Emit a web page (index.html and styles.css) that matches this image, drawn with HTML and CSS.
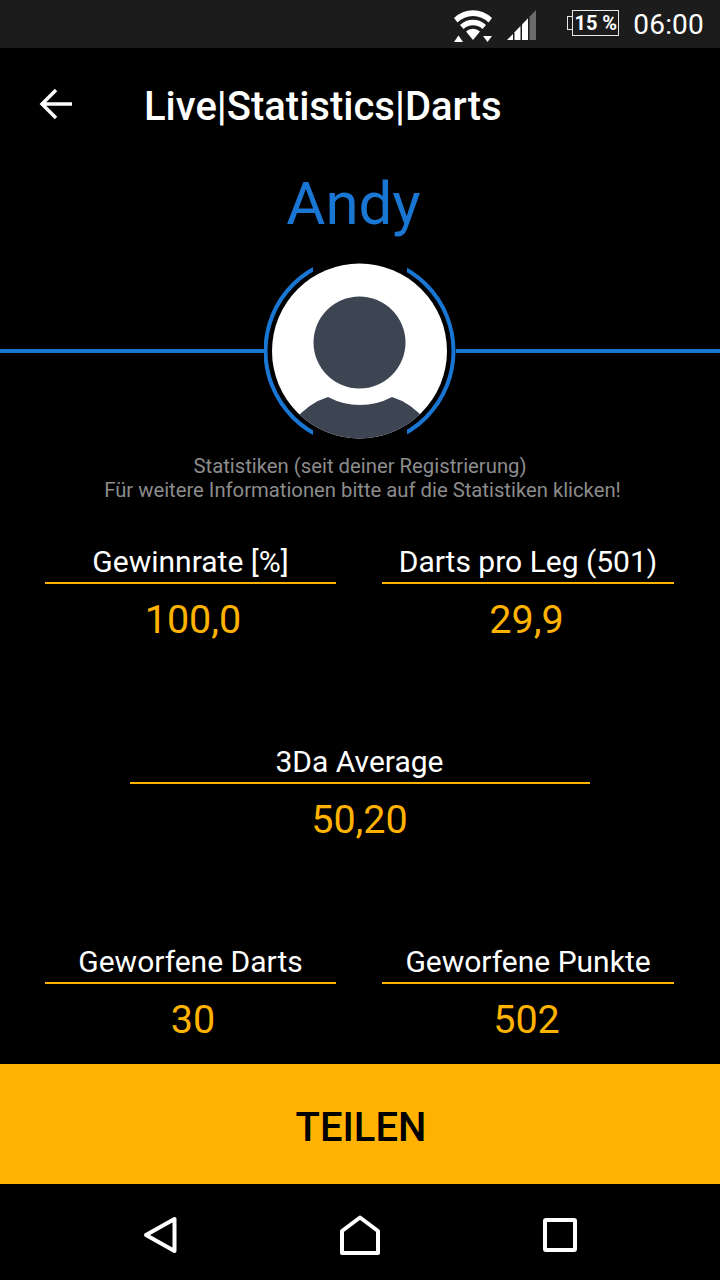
FILE: index.html
```html
<!DOCTYPE html>
<html lang="de">
    <head>
        <meta charset="UTF-8" />
        <meta name="viewport" content="width=device-width, initial-scale=1.0" />
        <link rel="stylesheet" href="styles.css">
        <title>Live|Statistics|Darts</title>
    </head>
    <body>
        <div class="status-bar">
            <svg class="wifi" width="40" height="32" viewBox="0 0 40 32">
                <path d="M1 8 A27 27 0 0 1 39 8 L35.500 12.500 A22 22 0 0 0 4.500 12.500 Z" fill="#fff" />
                <path d="M7 15 A19 19 0 0 1 33 15 L29.500 19 A14 14 0 0 0 10.500 19 Z" fill="#fff" />
                <path d="M13 21.500 A10 10 0 0 1 27 21.500 L20 30 Z" fill="#fff" />
                <path d="M1 32 L5.500 25.500 L10 32 Z" fill="#fff" />
                <path d="M30 26 L39 26 L34.500 32 Z" fill="#fff" />
            </svg>
            <svg class="signal" width="30" height="30" viewBox="0 0 30 30">
                <path d="M0 30 L6 24 L6 30 Z" fill="#fff" />
                <path d="M7.500 30 L7.500 22.300 L13.500 16 L13.500 30 Z" fill="#fff" />
                <path d="M15 30 L15 14.500 L21 8.300 L21 30 Z" fill="#fff" />
                <path d="M22.500 30 L22.500 6.800 L29 0 L29 30 Z" fill="#6b6b6b" />
            </svg>
            <div class="battery">
                <span class="battery-cap"></span>
                <span class="battery-text">15 %</span>
            </div>
            <span class="clock">06:00</span>
        </div>

        <div class="toolbar">
            <svg class="back" width="34" height="32" viewBox="0 0 34 32">
                <path d="M33 16 L3 16 M17 2 L3 16 L17 30" fill="none" stroke="#fff" stroke-width="3.500" />
            </svg>
            <h1 class="title">Live|Statistics|Darts</h1>
        </div>

        <div class="player-name">Andy</div>

        <div class="avatar-row">
            <div class="avatar-line"></div>
            <svg class="avatar" width="192" height="194" viewBox="1 0 192 194">
                <defs>
                    <clipPath id="ring-clip">
                        <rect x="0" y="0" width="50" height="194" />
                        <rect x="144" y="0" width="50" height="194" />
                    </clipPath>
                    <clipPath id="face-clip">
                        <circle cx="96.500" cy="97" r="87.500" />
                    </clipPath>
                </defs>
                <circle cx="96.500" cy="97" r="94" fill="none" stroke="#1976d2" stroke-width="4" clip-path="url(#ring-clip)" />
                <circle cx="96.500" cy="97" r="87.500" fill="#fff" />
                <circle cx="96.500" cy="88.500" r="46" fill="#3d4552" />
                <path d="M30 194 L30 168 Q45 149 65 143 A68 68 0 0 0 129 143 Q149 149 164 168 L164 194 Z" fill="#3d4552" clip-path="url(#face-clip)" />
            </svg>
            <div class="avatar-line"></div>
        </div>

        <p class="hint">
            <span class="hint-line">Statistiken (seit deiner Registrierung)</span>
            <span class="hint-line hint-line-long">Für weitere Informationen bitte auf die Statistiken klicken!</span>
        </p>

        <div class="stats">
            <div class="stat-row">
                <div class="stat stat-left">
                    <div class="stat-label">Gewinnrate [%]</div>
                    <div class="stat-value">100,0</div>
                </div>
                <div class="stat stat-right">
                    <div class="stat-label">Darts pro Leg (501)</div>
                    <div class="stat-value">29,9</div>
                </div>
            </div>
            <div class="stat-row">
                <div class="stat stat-wide">
                    <div class="stat-label">3Da Average</div>
                    <div class="stat-value">50,20</div>
                </div>
            </div>
            <div class="stat-row">
                <div class="stat stat-left">
                    <div class="stat-label">Geworfene Darts</div>
                    <div class="stat-value">30</div>
                </div>
                <div class="stat stat-right">
                    <div class="stat-label">Geworfene Punkte</div>
                    <div class="stat-value">502</div>
                </div>
            </div>
        </div>

        <button class="share" type="button">TEILEN</button>

        <div class="nav-bar">
            <svg width="34" height="38" viewBox="0 0 34 38">
                <path d="M31.500 3 L31.500 35 L3 19 Z" fill="none" stroke="#fff" stroke-width="4" stroke-linejoin="round" />
            </svg>
            <svg width="40" height="40" viewBox="0 0 40 40">
                <path d="M2 16 L20 2.500 L38 16 L38 38 L2 38 Z" fill="none" stroke="#fff" stroke-width="4" stroke-linejoin="round" />
            </svg>
            <svg width="34" height="34" viewBox="0 0 34 34">
                <rect x="2" y="2" width="30" height="30" rx="1" fill="none" stroke="#fff" stroke-width="4" />
            </svg>
        </div>
    </body>
</html>
```

FILE: styles.css
```css
* {
    margin: 0;
    padding: 0;
    box-sizing: border-box;
    font-family: Roboto, "Noto Sans", sans-serif;
}

body {
    width: 720px;
    height: 1280px;
    background-color: #000;
    color: #fff;
    overflow: hidden;
}

.status-bar {
    display: flex;
    align-items: center;
    height: 48px;
    padding-right: 16px;
    background-color: #1c1c1c;
    justify-content: flex-end;
}

.wifi {
    margin-right: 14px;
    margin-top: 4px;
}

.signal {
    margin-right: 35px;
    margin-top: 2px;
}

.battery {
    display: flex;
    align-items: center;
    justify-content: center;
    position: relative;
    width: 47px;
    height: 26px;
    margin-right: 14px;
    margin-bottom: 3px;
    border: 1px solid #e8e8e8;
}

.battery-cap {
    position: absolute;
    left: -6px;
    top: 5px;
    width: 5px;
    height: 14px;
    border: 1px solid #e8e8e8;
    border-right: none;
}

.battery-text {
    font-size: 20px;
    font-weight: 700;
    line-height: 24px;
    white-space: nowrap;
}

.clock {
    font-size: 28px;
    letter-spacing: 0.2px;
    line-height: 48px;
    padding-top: 2px;
}

.toolbar {
    display: flex;
    align-items: center;
    height: 112px;
    padding-left: 39px;
}

.title {
    margin-left: 71px;
    margin-top: 6px;
    font-size: 40px;
    font-weight: 500;
    line-height: 48px;
}

.player-name {
    height: 86px;
    padding-right: 13px;
    color: #1976d2;
    font-size: 60px;
    line-height: 88px;
    text-align: center;
}

.avatar-row {
    display: flex;
    align-items: center;
    height: 194px;
    margin-top: 8px;
}

.avatar-line {
    flex: 1;
    height: 4px;
    background-color: #1976d2;
}

.hint {
    margin-top: 6px;
    color: #8c8c8c;
    font-size: 20.300px;
    line-height: 24px;
    text-align: center;
}

.hint-line {
    display: block;
}

.hint-line-long {
    padding-left: 5px;
    font-size: 20.250px;
}

.stats {
    display: flex;
    flex-direction: column;
    margin-top: 38px;
}

.stat-row {
    display: flex;
    justify-content: space-between;
    height: 200px;
    padding: 0 46px 0 45px;
}

.stat {
    width: 292px;
}

.stat-left {
    width: 291px;
}

.stat-left .stat-value {
    padding-left: 5px;
}

.stat-right .stat-value {
    padding-right: 3px;
}

.stat-wide {
    width: 460px;
    margin: 0 auto;
}

.stat-label {
    height: 44px;
    padding-top: 2px;
    border-bottom: 2px solid #ffb300;
    font-size: 30px;
    line-height: 40px;
    text-align: center;
}

.stat-value {
    color: #ffb300;
    font-size: 39.500px;
    line-height: 72px;
    text-align: center;
}

.share {
    display: block;
    position: absolute;
    left: 0;
    top: 1064px;
    width: 720px;
    height: 120px;
    padding: 6px 0 0 2px;
    border: none;
    background-color: #ffb300;
    color: #000;
    font-size: 40px;
    font-weight: 500;
}

.nav-bar {
    position: absolute;
    left: 0;
    top: 1184px;
    display: flex;
    align-items: center;
    justify-content: space-between;
    width: 720px;
    height: 96px;
    padding: 6px 143px 0;
}
```
